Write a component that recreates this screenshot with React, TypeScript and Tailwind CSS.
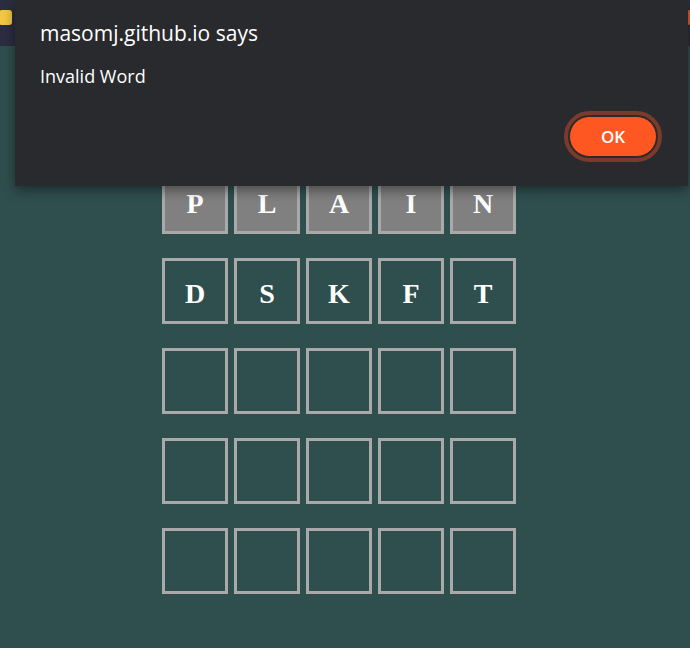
import React from "react";

const rows = [
  { letters: ["P", "L", "A", "I", "N"], filled: true },
  { letters: ["D", "S", "K", "F", "T"], filled: false },
  { letters: ["", "", "", "", ""], filled: false },
  { letters: ["", "", "", "", ""], filled: false },
  { letters: ["", "", "", "", ""], filled: false },
];

export default function App() {
  return (
    <div className="relative w-[690px] h-[648px] overflow-hidden bg-[#2f4f4f]">
      <div className="h-[46px] bg-[#2c2d42] flex items-start justify-between pt-[10px]">
        <div className="w-[13px] h-[15px] bg-[#f4c845] rounded-[3px] -ml-[1px]" />
        <div className="w-[10px] h-[15px] bg-[#f05a22] rounded-[3px] -mr-[7px]" />
      </div>
      <div className="pt-[122px] pl-[162px] flex flex-col gap-[24px]">
        {rows.map((r, i) => (
          <div key={i} className="flex gap-[6px]">
            {r.letters.map((l, j) => (
              <div
                key={j}
                className={`w-[66px] h-[66px] border-[3px] border-[#a9a9a9] flex items-center justify-center pt-[6px] text-white font-bold text-[28px] ${
                  r.filled ? "bg-[#808080]" : ""
                }`}
                style={{ fontFamily: '"Liberation Serif", serif' }}
              >
                {l}
              </div>
            ))}
          </div>
        ))}
      </div>
      <div
        className="absolute left-[15px] top-0 w-[673px] h-[186px] bg-[#292a2d] shadow-[0_4px_12px_rgba(0,0,0,0.45)] flex flex-col"
        style={{ fontFamily: '"Open Sans", "Noto Sans", sans-serif' }}
      >
        <div className="pl-[25px] pt-[19px] text-[21px] leading-[28px] text-white">
          masomj.github.io says
        </div>
        <div className="pl-[25px] pt-[17px] text-[18px] leading-[24px] text-white">
          Invalid Word
        </div>
        <div className="flex justify-end pr-[26px] mt-[23px]">
          <div className="rounded-full border-[4px] border-[#7a3b2c] p-[1px] bg-[#292a2d]">
            <div className="w-[88px] h-[41px] rounded-full bg-[#ff5722] border border-[#2a2a2a] flex items-center justify-center text-white text-[17px] font-semibold">
              OK
            </div>
          </div>
        </div>
      </div>
    </div>
  );
}
